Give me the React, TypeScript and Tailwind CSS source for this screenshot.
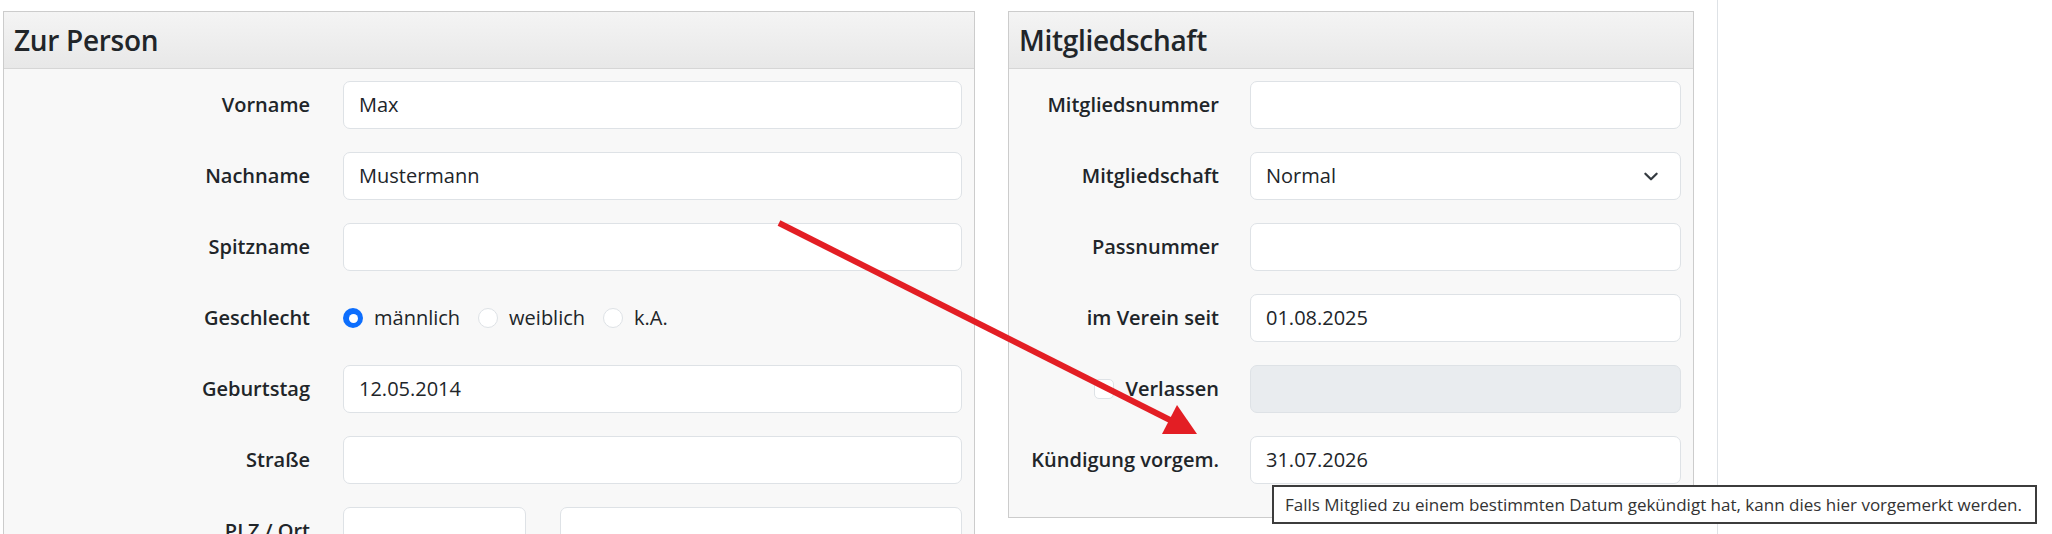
import React from 'react';

const fontCls = "font-['Open_Sans',sans-serif]";

const Field = ({ value = '', disabled = false }: { value?: string; disabled?: boolean }) => (
  <div
    className={`h-[48px] rounded-[7px] border border-[#dee2e6] flex items-center px-[15px] text-[20px] text-[#212529] ${
      disabled ? 'bg-[#e9ecef]' : 'bg-white'
    }`}
  >
    {value}
  </div>
);

const Select = ({ value }: { value: string }) => (
  <div className="h-[48px] rounded-[7px] border border-[#dee2e6] bg-white flex items-center justify-between pl-[15px] pr-[19px] text-[20px] text-[#212529]">
    <span>{value}</span>
    <svg width="20" height="15" viewBox="0 0 16 16" fill="none">
      <path d="M2 5l6 6 6-6" stroke="#343a40" strokeWidth="2.4" strokeLinecap="round" strokeLinejoin="round" />
    </svg>
  </div>
);

const Label = ({ children }: { children: React.ReactNode }) => (
  <div className="flex items-center justify-end h-[48px] text-[20px] font-semibold text-[#212529] whitespace-nowrap">
    {children}
  </div>
);

const Radio = ({ label, checked = false }: { label: string; checked?: boolean }) => (
  <div className="flex items-center mr-[18px]">
    {checked ? (
      <span className="w-[20px] h-[20px] rounded-full bg-[#0d6efd] flex items-center justify-center">
        <span className="w-[9px] h-[9px] rounded-full bg-white" />
      </span>
    ) : (
      <span className="w-[20px] h-[20px] rounded-full bg-white border border-[#dee2e6]" />
    )}
    <span className="ml-[11px] text-[20px] text-[#212529]">{label}</span>
  </div>
);

const Panel = ({ title, children, className = '' }: { title: string; children: React.ReactNode; className?: string }) => (
  <div className={`border border-[#cccccc] bg-[#f8f8f8] ${className}`}>
    <div className="h-[57px] border-b border-[#d6d6d6] bg-gradient-to-b from-[#f4f4f4] to-[#e8e8e8] flex items-center pl-[10px]">
      <h4 className="text-[28px] font-semibold tracking-[-0.3px] text-[#212529] leading-none">{title}</h4>
    </div>
    {children}
  </div>
);

export default function App() {
  return (
    <div className={`relative w-[2052px] h-[534px] overflow-hidden bg-white ${fontCls}`}>
      <div className="flex items-stretch h-full pl-[3px]">
        {/* Zur Person */}
        <Panel title="Zur Person" className="mt-[11px] w-[972px] self-start">
          <div className="grid grid-cols-[306px_1fr] gap-x-[33px] gap-y-[23px] pt-[12px] pr-[12px] pb-[40px]">
            <Label>Vorname</Label>
            <Field value="Max" />
            <Label>Nachname</Label>
            <Field value="Mustermann" />
            <Label>Spitzname</Label>
            <Field />
            <Label>Geschlecht</Label>
            <div className="flex items-center h-[48px]">
              <Radio label="männlich" checked />
              <Radio label="weiblich" />
              <Radio label="k.A." />
            </div>
            <Label>Geburtstag</Label>
            <Field value="12.05.2014" />
            <Label>Straße</Label>
            <Field />
            <Label>PLZ / Ort</Label>
            <div className="flex gap-[34px]">
              <div className="w-[183px]">
                <Field />
              </div>
              <div className="flex-1">
                <Field />
              </div>
            </div>
          </div>
        </Panel>

        {/* Mitgliedschaft */}
        <Panel title="Mitgliedschaft" className="mt-[11px] ml-[33px] w-[686px] self-start">
          <div className="grid grid-cols-[210px_1fr] gap-x-[31px] gap-y-[23px] pt-[12px] pr-[12px] pb-[33px]">
            <Label>Mitgliedsnummer</Label>
            <Field />
            <Label>Mitgliedschaft</Label>
            <Select value="Normal" />
            <Label>Passnummer</Label>
            <Field />
            <Label>im Verein seit</Label>
            <Field value="01.08.2025" />
            <Label>
              <span className="w-[20px] h-[20px] rounded-[5px] border border-[#dee2e6] bg-white mr-[12px]" />
              Verlassen
            </Label>
            <Field disabled />
            <Label>Kündigung vorgem.</Label>
            <Field value="31.07.2026" />
          </div>
        </Panel>

        <div className="ml-[23px] border-l border-[#dee2e6]" />
      </div>

      {/* annotation arrow */}
      <svg className="absolute left-0 top-0 pointer-events-none" width="2052" height="534">
        <line x1="779" y1="223" x2="1172" y2="421" stroke="#e31e24" strokeWidth="6" />
        <polygon points="1197,434 1162,434 1177,405" fill="#e31e24" />
      </svg>

      {/* tooltip */}
      <div className="absolute left-[1272px] top-[485px] w-[765px] h-[39px] border-2 border-[#3c3c3c] bg-white flex items-center pl-[11px] text-[17px] text-[#333333] whitespace-nowrap">
        Falls Mitglied zu einem bestimmten Datum gekündigt hat, kann dies hier vorgemerkt werden.
      </div>
    </div>
  );
}
